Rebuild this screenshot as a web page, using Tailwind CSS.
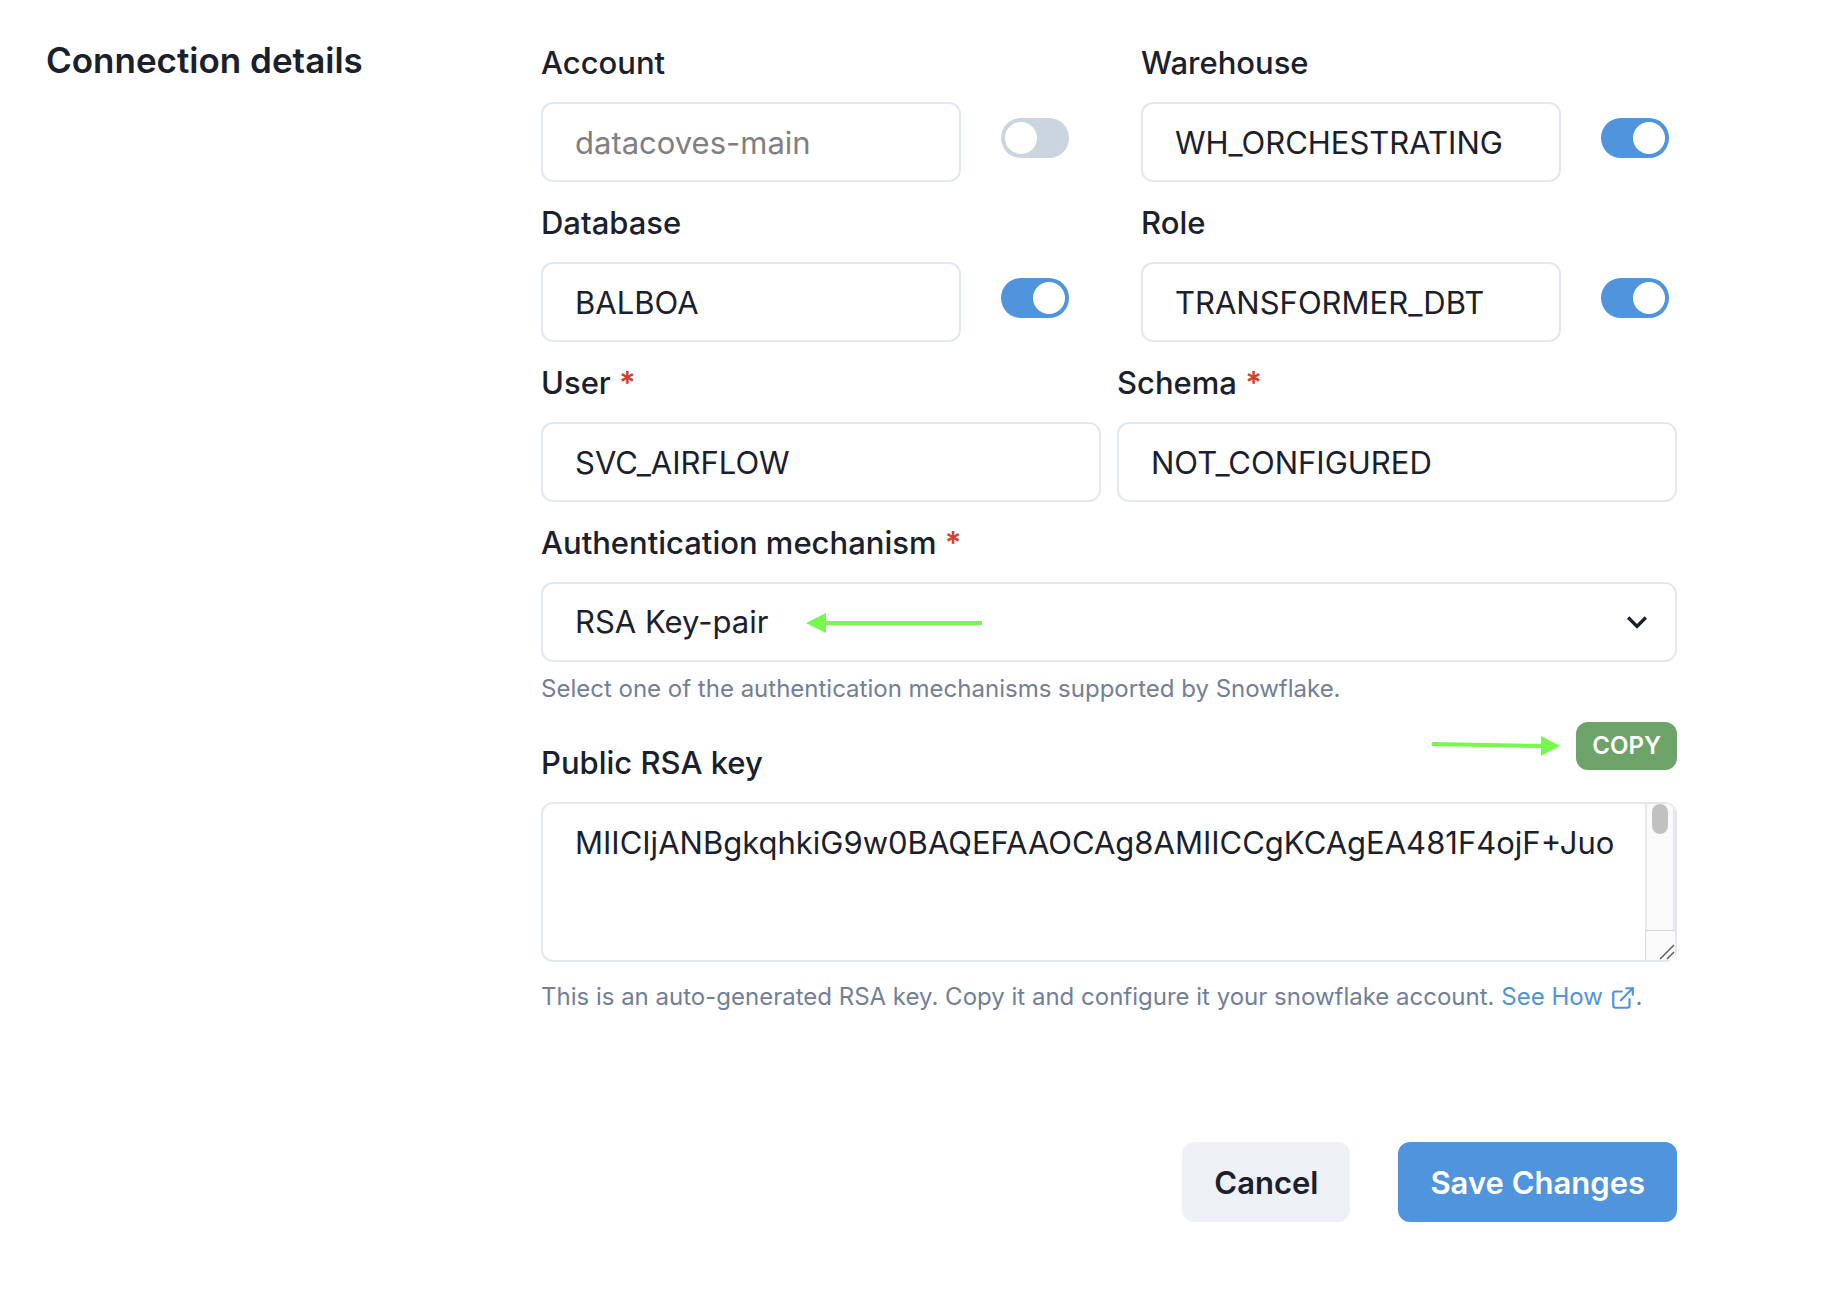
<!DOCTYPE html>
<html lang="en">
<head>
  <meta charset="UTF-8" />
  <meta name="viewport" content="width=device-width, initial-scale=1" />
  <title>Connection details</title>
  <script src="https://cdn.jsdelivr.net/npm/@tailwindcss/browser@4"></script>
</head>
<body class="bg-white text-[#1a202c] font-['Inter',sans-serif] text-[31px] leading-[50px]">

  <form class="grid grid-cols-[495px_1fr] pt-[38px] pl-[46px] pr-[157px] pb-[74px]" onsubmit="return false;">
    <h2 class="text-[35px] leading-[44px] font-semibold">Connection details</h2>

    <div class="min-w-0">
      <!-- Fields that can be overridden -->
      <div class="grid grid-cols-2 gap-x-16 gap-y-4">
        <div>
          <label for="account" class="block font-medium mb-3.5">Account</label>
          <div class="flex items-center gap-10 pr-2">
            <input id="account" type="text" placeholder="datacoves-main" class="flex-1 min-w-0 h-20 px-8 border-2 border-[#e2e8f0] rounded-xl placeholder:text-[#808080]" />
            <input type="checkbox" role="switch" aria-label="Override account" class="appearance-none shrink-0 w-[68px] h-10 mb-2 p-1 rounded-full bg-[#cbd5e0] checked:bg-[#5094db] before:block before:size-8 before:rounded-full before:bg-white checked:before:ml-auto" />
          </div>
        </div>
        <div>
          <label for="warehouse" class="block font-medium mb-3.5">Warehouse</label>
          <div class="flex items-center gap-10 pr-2">
            <input id="warehouse" type="text" value="WH_ORCHESTRATING" class="flex-1 min-w-0 h-20 px-8 border-2 border-[#e2e8f0] rounded-xl" />
            <input type="checkbox" role="switch" checked aria-label="Override warehouse" class="appearance-none shrink-0 w-[68px] h-10 mb-2 p-1 rounded-full bg-[#cbd5e0] checked:bg-[#5094db] before:block before:size-8 before:rounded-full before:bg-white checked:before:ml-auto" />
          </div>
        </div>
        <div>
          <label for="database" class="block font-medium mb-3.5">Database</label>
          <div class="flex items-center gap-10 pr-2">
            <input id="database" type="text" value="BALBOA" class="flex-1 min-w-0 h-20 px-8 border-2 border-[#e2e8f0] rounded-xl" />
            <input type="checkbox" role="switch" checked aria-label="Override database" class="appearance-none shrink-0 w-[68px] h-10 mb-2 p-1 rounded-full bg-[#cbd5e0] checked:bg-[#5094db] before:block before:size-8 before:rounded-full before:bg-white checked:before:ml-auto" />
          </div>
        </div>
        <div>
          <label for="role" class="block font-medium mb-3.5">Role</label>
          <div class="flex items-center gap-10 pr-2">
            <input id="role" type="text" value="TRANSFORMER_DBT" class="flex-1 min-w-0 h-20 px-8 border-2 border-[#e2e8f0] rounded-xl" />
            <input type="checkbox" role="switch" checked aria-label="Override role" class="appearance-none shrink-0 w-[68px] h-10 mb-2 p-1 rounded-full bg-[#cbd5e0] checked:bg-[#5094db] before:block before:size-8 before:rounded-full before:bg-white checked:before:ml-auto" />
          </div>
        </div>
      </div>

      <!-- User and schema -->
      <div class="grid grid-cols-2 gap-4 mt-4">
        <div>
          <label for="user" class="block font-medium mb-3.5">User <span class="font-semibold text-[#d6402b]">*</span></label>
          <input id="user" type="text" value="SVC_AIRFLOW" required class="w-full h-20 px-8 border-2 border-[#e2e8f0] rounded-xl" />
        </div>
        <div>
          <label for="schema" class="block font-medium mb-3.5">Schema <span class="font-semibold text-[#d6402b]">*</span></label>
          <input id="schema" type="text" value="NOT_CONFIGURED" required class="w-full h-20 px-8 border-2 border-[#e2e8f0] rounded-xl" />
        </div>
      </div>

      <!-- Authentication -->
      <div class="mt-4">
        <label for="auth" class="block font-medium mb-3.5">Authentication mechanism <span class="font-semibold text-[#d6402b]">*</span></label>
        <div class="relative">
          <select id="auth" class="block appearance-none w-full h-20 px-8 bg-white border-2 border-[#e2e8f0] rounded-xl">
            <option>RSA Key-pair</option>
            <option>Password</option>
          </select>
          <svg class="absolute right-5 top-5 size-10 pointer-events-none" viewBox="0 0 24 24" fill="currentColor"><path d="M16.59 8.59L12 13.17 7.41 8.59 6 10l6 6 6-6z" /></svg>
          <svg class="absolute left-[265px] top-[31px] w-[176px] h-5 pointer-events-none" viewBox="0 0 176 20" fill="#75f94c"><path d="M0 10L20 0V8H176V12H20V20Z" /></svg>
        </div>
        <p class="mt-2 text-[24px] leading-[38px] text-[#718096]">Select one of the authentication mechanisms supported by Snowflake.</p>
      </div>

      <!-- Public key -->
      <div class="mt-3.5">
        <div class="flex items-start justify-between mb-3.5">
          <label for="public-key" class="font-medium pt-4">Public RSA key</label>
          <div class="flex items-start gap-4">
            <svg class="w-[128px] h-5 mt-3.5" viewBox="0 0 128 20"><path d="M0 8L110 10" stroke="#75f94c" stroke-width="4" /><path d="M109 0L128 10L109 20Z" fill="#75f94c" /></svg>
            <button type="button" onclick="copyKey()" class="h-12 px-4 rounded-xl bg-[#6ba368] text-white text-[24px] leading-[38px] font-semibold">COPY</button>
          </div>
        </div>
        <div class="relative h-40">
          <textarea id="public-key" readonly class="block w-full h-full resize-none overflow-hidden px-8 py-4 leading-[46px] border-2 border-[#e2e8f0] rounded-xl">MIICIjANBgkqhkiG9w0BAQEFAAOCAg8AMIICCgKCAgEA481F4ojF+Juo</textarea>
          <!-- Scroll track, thumb and resize corner -->
          <div class="absolute inset-y-0.5 right-0.5 w-[30px] flex flex-col rounded-tr-lg overflow-hidden pointer-events-none">
            <div class="flex-1 bg-[#fafafa] border-x-2 border-[#e8e8e8]"><div class="mx-auto w-4 h-[30px] rounded-full bg-[#c1c1c1]"></div></div>
            <div class="h-[30px] bg-[#fafafa] border-t border-l border-[#d6d6d6]">
              <svg class="size-[29px]" viewBox="0 0 29 29" fill="none" stroke="#606060" stroke-width="1.500"><path d="M14 28L28 14M21 28L28 21" /></svg>
            </div>
          </div>
        </div>
        <p class="mt-4 text-[24px] leading-[38px] text-[#718096]">This is an auto-generated RSA key. Copy it and configure it your snowflake account. <a href="#" class="text-[#5094db]">See How <svg class="inline align-text-bottom size-[26px]" viewBox="0 0 24 24" fill="none" stroke="currentColor" stroke-width="2" stroke-linecap="round"><path d="M18 13v6a2 2 0 01-2 2H5a2 2 0 01-2-2V8a2 2 0 012-2h6" /><path d="M15 3h6v6" /><path d="M10 14L21 3" /></svg></a>.</p>
      </div>

      <!-- Actions -->
      <div class="flex justify-end gap-12 mt-[126px]">
        <button type="button" class="h-20 px-8 pt-0.5 rounded-xl bg-[#edf1f6] font-semibold">Cancel</button>
        <button type="submit" class="h-20 px-8 pt-0.5 rounded-xl bg-[#5094db] text-white font-semibold">Save Changes</button>
      </div>
    </div>
  </form>

  <script>
    function copyKey() {
      const key = document.getElementById("public-key");
      key.select();
      navigator.clipboard.writeText(key.value).catch(() => {});
    }
  </script>
</body>
</html>
